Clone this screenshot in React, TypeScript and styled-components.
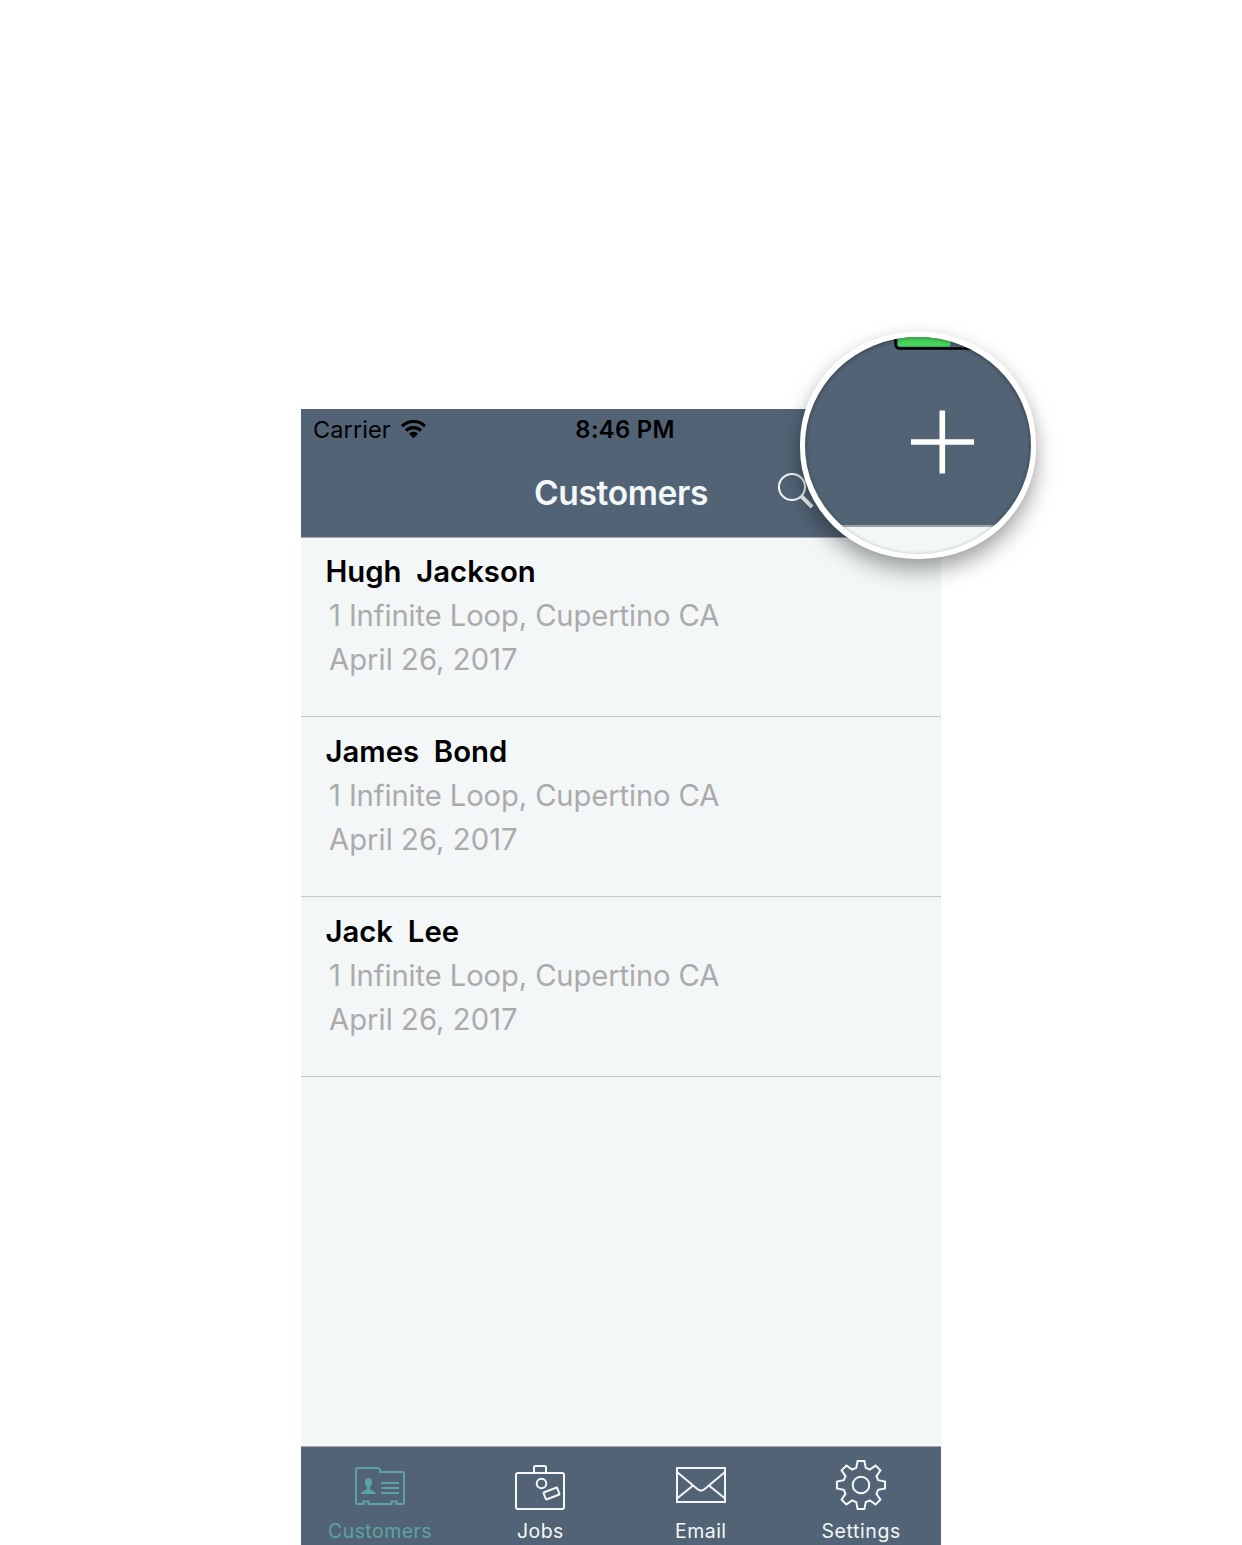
import React from "react";
import styled, { createGlobalStyle } from "styled-components";

const slate = "#526375";
const paper = "#f3f7f8";
const teal = "#5aa3a1";

const GlobalStyle = createGlobalStyle`
  * { box-sizing: border-box; }
  body {
    margin: 0;
    background: #fff;
    font-family: Inter, "Liberation Sans", sans-serif;
  }
`;

const Stage = styled.main`
  position: relative;
  width: 1242px;
  height: 1545px;
  padding: 409px 301px 0;
  overflow: hidden;
`;

const Phone = styled.section`
  display: flex;
  flex-direction: column;
  width: 640px;
  height: 1136px;
  background: ${paper};
`;

const Header = styled.header`
  display: flex;
  flex-direction: column;
  height: 129px;
  background: ${slate};
  border-bottom: 1px solid #a5aaae;
`;

const StatusBar = styled.div`
  display: grid;
  grid-template-columns: 1fr auto 1fr;
  align-items: center;
  height: 42px;
  padding-left: 12px;
  color: #000;
`;

const Carrier = styled.div`
  display: flex;
  align-items: center;
  gap: 10px;
  svg { display: block; margin-bottom: 2px; }
`;

const Label = styled.span<{ $size: number; $weight?: number; $track?: number }>`
  font-size: ${(p) => p.$size}px;
  font-weight: ${(p) => p.$weight ?? 400};
  letter-spacing: ${(p) => p.$track ?? 0}px;
  line-height: 1.2;
  white-space: pre;
`;

const Clock = styled(Label)`
  padding-right: 4px;
`;

const NavBar = styled.div`
  display: grid;
  grid-template-columns: 1fr auto 1fr;
  align-items: center;
  height: 86px;
  color: ${paper};
`;

const Title = styled(Label).attrs({ as: "h1" })`
  grid-column: 2;
  margin: 0 0 2px;
`;

const SearchButton = styled.button`
  justify-self: start;
  margin: 0 0 6px 69px;
  padding: 0;
  border: 0;
  background: none;
  color: inherit;
  svg { display: block; }
`;

const List = styled.ul`
  flex: 1;
  margin: 0;
  padding: 0;
  list-style: none;
`;

const Row = styled.li`
  display: flex;
  flex-direction: column;
  height: 180px;
  padding: 13px 24px 0;
  border-bottom: 1px solid #c6c9cb;
  &:first-child { height: 179px; padding-top: 12px; }
`;

const Line = styled(Label)<{ $muted?: boolean }>`
  height: 44px;
  line-height: 44px;
  margin-left: ${(p) => (p.$muted ? 4 : 0.5)}px;
  color: ${(p) => (p.$muted ? "#ababab" : "#000")};
`;

const TabBar = styled.nav`
  display: grid;
  grid-template-columns: repeat(4, 158px);
  column-gap: 2.4px;
  height: 99px;
  background: ${slate};
  border-top: 1px solid #a5aaae;
`;

const Tab = styled.a<{ $active?: boolean }>`
  display: flex;
  flex-direction: column;
  align-items: center;
  padding-top: 12px;
  color: ${(p) => (p.$active ? teal : paper)};
  svg { display: block; overflow: visible; }
`;

const TabLabel = styled(Label)`
  margin-top: 9px;
  line-height: 26px;
`;

const Lens = styled.div`
  position: absolute;
  left: 800px;
  top: 332px;
  width: 236px;
  height: 227px;
  border: 5px solid #fff;
  border-radius: 49%;
  background: #fff;
  box-shadow: 0 12px 22px -1px rgba(0, 0, 0, 0.36), 0 0 14px rgba(0, 0, 0, 0.05);
`;

const LensView = styled.div`
  width: 100%;
  height: 100%;
  border-radius: 50%;
  overflow: hidden;
  svg { display: block; }
`;

const LensGlass = styled.div`
  position: absolute;
  inset: 0;
  border-radius: 50%;
  box-shadow: inset 0 1px 4px rgba(0, 0, 0, 0.36);
`;

const stroke = { fill: "none", stroke: "currentColor", strokeWidth: 2 };

const WifiIcon = () => (
  <svg width="26" height="18" viewBox="0 0 26 18">
    <g fill="none" stroke="#000" strokeWidth="3.1">
      <path d="M1 6.200C7.500-.1 17.500-.1 24 6.200" />
      <path d="M5 10.600c4.200-4 10.800-4 15 0" />
    </g>
    <path d="M8 13.700c2.400-2.600 6.600-2.600 9 0L12.500 18.300z" />
  </svg>
);

const SearchIcon = () => (
  <svg width="38" height="36" viewBox="0 0 38 36">
    <circle cx="15" cy="14" r="13" {...stroke} strokeWidth="2" />
    <path d="M24.800 23.700l10.300 10.300" {...stroke} strokeWidth="4" />
  </svg>
);

const CustomersIcon = () => (
  <svg width="50" height="50" viewBox="0 0 50 50">
    <path
      {...stroke}
      d="M3 9H22.500Q24.500 9 25 11V13H47Q49 13 49 15V43Q49 45 47 45H41.500V42.500H36.500V45H13.500V42.500H8.500V45H3Q1 45 1 43V11Q1 9 3 9Z"
    />
    <path
      fill="currentColor"
      d="M13.500 19c-2.500 0-3.700 1.600-3.500 4 .1 2.400.8 4 1.900 5.200v2.100c-.5 1.200-5.700 1.600-5.900 4.700h15c-.2-3.100-5.400-3.500-5.900-4.700v-2.100c1.100-1.200 1.800-2.800 1.900-5.200.2-2.400-1-4-3.500-4z"
    />
    <path {...stroke} d="M26 24h18M26 29h18M26 34h18" />
  </svg>
);

const JobsIcon = () => (
  <svg width="50" height="50" viewBox="0 0 50 50">
    <rect {...stroke} x="1" y="14" width="48" height="36" rx="2" />
    <path {...stroke} d="M19 14V8.500Q19 7 20.500 7H29.500Q31 7 31 8.500V14" />
    <circle {...stroke} cx="26.500" cy="24.500" r="4.800" />
    <rect {...stroke} x="29.200" y="30.700" width="14.600" height="7.600" rx="1" transform="rotate(-21 36.500 34.500)" />
  </svg>
);

const MailIcon = () => (
  <svg width="50" height="50" viewBox="0 0 50 50">
    <rect {...stroke} x="1" y="9" width="48" height="34" />
    <path {...stroke} d="M1 13L21 29.800Q25 33.400 29 29.800L49 13M1 39.500L17 26.500M49 39.500L33 26.500" />
  </svg>
);

const gearPath = () => {
  const points: string[] = [];
  const at = (radius: number, degrees: number) => {
    const a = (degrees * Math.PI) / 180;
    points.push(`${(25 + radius * Math.sin(a)).toFixed(2)} ${(26 - radius * Math.cos(a)).toFixed(2)}`);
  };
  for (let tooth = 0; tooth < 8; tooth++) {
    const mid = tooth * 45;
    at(17.8, mid - 15.5);
    at(24.3, mid - 8);
    at(24.3, mid + 8);
    at(17.8, mid + 15.5);
  }
  return `M${points.join("L")}Z`;
};

const SettingsIcon = () => (
  <svg width="50" height="50" viewBox="0 0 50 50">
    <path {...stroke} d={gearPath()} />
    <circle {...stroke} cx="25" cy="26" r="8.300" />
  </svg>
);

const MagnifiedBar = () => (
  <svg width="226" height="217" viewBox="0 0 226 217">
    <rect width="226" height="188" fill={slate} />
    <rect y="188" width="226" height="2" fill="#a0a3a7" />
    <rect y="190" width="226" height="27" fill={paper} />
    <rect x="90.500" y="-20" width="94" height="31.500" rx="4" fill="none" stroke="#000" strokeWidth="2.400" />
    <rect x="93" y="-18" width="52.500" height="27.500" rx="2" fill="#47d65b" />
    <path d="M106 105H169M137.300 73.500V136.500" stroke="#fff" strokeWidth="5.600" />
  </svg>
);

const customers = ["Hugh  Jackson", "James  Bond", "Jack  Lee"];

const tabs = [
  { name: "Customers", Icon: CustomersIcon, track: 0.45 },
  { name: "Jobs", Icon: JobsIcon, track: 0.45 },
  { name: "Email", Icon: MailIcon, track: 0.45 },
  { name: "Settings", Icon: SettingsIcon, track: 0.6 },
];

export default function App() {
  return (
    <Stage>
      <GlobalStyle />
      <Phone>
        <Header>
          <StatusBar>
            <Carrier>
              <Label $size={23.5} $track={0.1}>Carrier</Label>
              <WifiIcon />
            </Carrier>
            <Clock $size={23.8} $weight={600} $track={0.3}>8:46 PM</Clock>
          </StatusBar>
          <NavBar>
            <Title $size={33.6} $weight={600} $track={-0.4}>Customers</Title>
            <SearchButton aria-label="Search">
              <SearchIcon />
            </SearchButton>
          </NavBar>
        </Header>
        <List>
          {customers.map((name) => (
            <Row key={name}>
              <Line $size={29.3} $weight={600} $track={0}>{name}</Line>
              <Line $size={29.2} $track={-0.1} $muted>1 Infinite Loop, Cupertino CA</Line>
              <Line $size={29.2} $track={0.05} $muted>April 26, 2017</Line>
            </Row>
          ))}
        </List>
        <TabBar>
          {tabs.map(({ name, Icon, track }, index) => (
            <Tab key={name} $active={index === 0}>
              <Icon />
              <TabLabel $size={19.5} $track={track}>{name}</TabLabel>
            </Tab>
          ))}
        </TabBar>
      </Phone>
      <Lens>
        <LensView>
          <MagnifiedBar />
        </LensView>
        <LensGlass />
      </Lens>
    </Stage>
  );
}
